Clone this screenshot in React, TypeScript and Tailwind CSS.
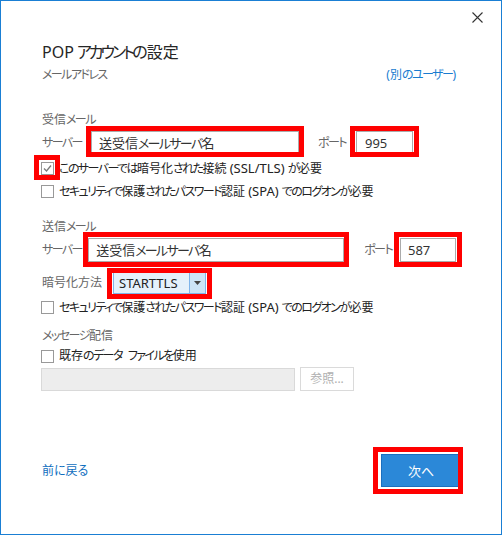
import React from "react";

const KANA = /[\u3040-\u30ff]/;
const LATIN = /[A-Za-z0-9()/.]/;

const J = ({ t, latin = "" }: { t: string; latin?: string }) => {
  const parts = t.match(/[\u3040-\u30ff]+|[A-Za-z0-9()/.]+|[^\u3040-\u30ffA-Za-z0-9()/.]+/g) || [];
  return (
    <>
      {parts.map((p, i) =>
        KANA.test(p) ? (
          <span key={i} className="tracking-[-0.13em]">
            {p}
          </span>
        ) : LATIN.test(p) ? (
          <span key={i} className={latin}>
            {p}
          </span>
        ) : (
          <span key={i}>{p}</span>
        )
      )}
    </>
  );
};

const Mark = ({ box, children }: { box: string; children: React.ReactNode }) => (
  <div className="relative flex shrink-0">
    {children}
    <span className={`pointer-events-none absolute border-[5px] border-[#ff0000] ${box}`} />
  </div>
);

const CheckBox = ({ checked }: { checked?: boolean }) => (
  <span className="flex h-[13px] w-[13px] shrink-0 items-center justify-center border border-[#999999] bg-white">
    {checked && (
      <svg width="11" height="11" viewBox="0 0 11 11">
        <polyline points="2,5.5 4.5,8 9,2.5" fill="none" stroke="#7a7a7a" strokeWidth="1.3" />
      </svg>
    )}
  </span>
);

const CheckRow = ({ label, checked, className }: { label: string; checked?: boolean; className: string }) => (
  <div className={`ml-[-1px] flex h-[16px] items-center ${className}`}>
    {checked ? (
      <Mark box="left-[-7px] right-[-6px] top-[-7px] bottom-[-5px]">
        <CheckBox checked />
      </Mark>
    ) : (
      <CheckBox />
    )}
    <span className="ml-[5px] whitespace-nowrap text-[#222222]">
      <J t={label} latin="text-[13px]" />
    </span>
  </div>
);

export default function App() {
  return (
    <div className="relative h-[535px] w-[502px] overflow-hidden border border-[#1a7fd4] bg-white font-['Noto_Sans','Noto_Sans_CJK_JP',sans-serif] text-[12px] leading-[16px] [font-feature-settings:'palt']">
      <button className="absolute right-[18px] top-[10px] flex h-[12px] w-[12px] items-center justify-center">
        <svg width="11" height="11" viewBox="0 0 11 11">
          <path d="M0.5 0.5 L10.5 10.5 M10.5 0.5 L0.5 10.5" stroke="#333333" strokeWidth="1.1" />
        </svg>
      </button>

      <div className="flex h-full flex-col pl-[41px] pr-[45px] pt-[41px]">
        <h1 className="flex whitespace-nowrap text-[16px] leading-[20px] text-[#262626]">
          <span>POP</span>
          <span className="ml-[3px] tracking-[-0.19em]">アカウントの</span>
          <span className="ml-[2px]">設定</span>
        </h1>

        <div className="mt-[5px] flex justify-between">
          <span className="text-[#666666]">
            <J t="メールアドレス" />
          </span>
          <span className="text-[#1a7cd0]">
            <J t="(別のユーザー)" />
          </span>
        </div>

        <div className="mt-[29px] text-[#666666]">
          <J t="受信メール" />
        </div>

        <div className="mt-[3px] flex h-[23px] items-center">
          <span className="w-[49px] whitespace-nowrap text-[#666666]">
            <J t="サーバー" />
          </span>
          <Mark box="left-[-5px] right-[-5px] top-[-5px] bottom-[-3px]">
            <div className="flex h-[23px] w-[208px] items-center border border-[#ababab] pl-[7px] text-[13px] text-[#333333]">
              <J t="送受信メールサーバ名" />
            </div>
          </Mark>
          <span className="ml-[19px] w-[38px] whitespace-nowrap text-[#666666]">
            <J t="ポート" />
          </span>
          <Mark box="left-[-6px] right-[-6px] top-[-5px] bottom-[-3px]">
            <div className="flex h-[23px] w-[57px] items-center border border-[#ababab] pl-[8px] text-[13px] text-[#333333]">
              995
            </div>
          </Mark>
        </div>

        <CheckRow className="mt-[6px]" checked label="このサーバーでは暗号化された接続 (SSL/TLS) が必要" />
        <CheckRow className="mt-[7px]" label="セキュリティで保護されたパスワード認証 (SPA) でのログオンが必要" />

        <div className="mt-[20px] text-[#666666]">
          <J t="送信メール" />
        </div>

        <div className="mt-[3px] flex h-[24px] items-center">
          <span className="w-[49px] whitespace-nowrap text-[#666666]">
            <J t="サーバー" />
          </span>
          <Mark box="left-[-5px] right-[-5px] top-[-6px] bottom-[-5px]">
            <div className="flex h-[24px] w-[256px] items-center border border-[#ababab] pl-[7px] text-[13px] text-[#333333]">
              <J t="送受信メールサーバ名" />
            </div>
          </Mark>
          <span className="ml-[20px] w-[38px] whitespace-nowrap text-[#666666]">
            <J t="ポート" />
          </span>
          <Mark box="left-[-6px] right-[-6px] top-[-6px] bottom-[-5px]">
            <div className="flex h-[24px] w-[56px] items-center border border-[#ababab] pl-[7px] text-[13px] text-[#333333]">
              587
            </div>
          </Mark>
        </div>

        <div className="mt-[10px] flex h-[22px] items-center">
          <span className="w-[71px] whitespace-nowrap text-[#666666]">暗号化方法</span>
          <Mark box="left-[-6px] right-[-6px] top-[-4px] bottom-[-5px]">
            <div className="flex h-[22px] w-[93px] items-stretch border border-[#7eb4ea] bg-[#e5f1fb]">
              <span className="flex flex-1 items-center pl-[5px] text-[13px] text-[#222222]">STARTTLS</span>
              <span className="flex w-[16px] items-center justify-center border-l border-[#7eb4ea] bg-[#cce4f7]">
                <svg width="7" height="4" viewBox="0 0 7 4">
                  <path d="M0 0 H7 L3.5 4 Z" fill="#444444" />
                </svg>
              </span>
            </div>
          </Mark>
        </div>

        <CheckRow className="mt-[5px]" label="セキュリティで保護されたパスワード認証 (SPA) でのログオンが必要" />

        <div className="mt-[13px] text-[#666666]">
          <J t="メッセージ配信" />
        </div>

        <CheckRow className="mt-[4px]" label={"既存のデータ\u2002ファイルを使用"} />

        <div className="ml-[-1px] mt-[3px] flex h-[24px] items-center">
          <div className="h-[23px] w-[254px] border border-[#d9d9d9] bg-[#ededed]" />
          <div className="ml-[5px] flex h-[24px] w-[54px] items-center justify-center border border-[#dadada] bg-white text-[#b0b0b0]">
            参照...
          </div>
        </div>

        <div className="mt-[63px] flex h-[33px] items-center justify-between">
          <span className="text-[#106ebe]">前に戻る</span>
          <Mark box="left-[-8px] right-[-7px] top-[-7px] bottom-[-7px]">
            <div className="mr-[-5px] flex h-[33px] w-[80px] items-center justify-center border border-[#1b6fbf] bg-[#2b88d8] text-[13px] text-white">
              次へ
            </div>
          </Mark>
        </div>
      </div>
    </div>
  );
}
